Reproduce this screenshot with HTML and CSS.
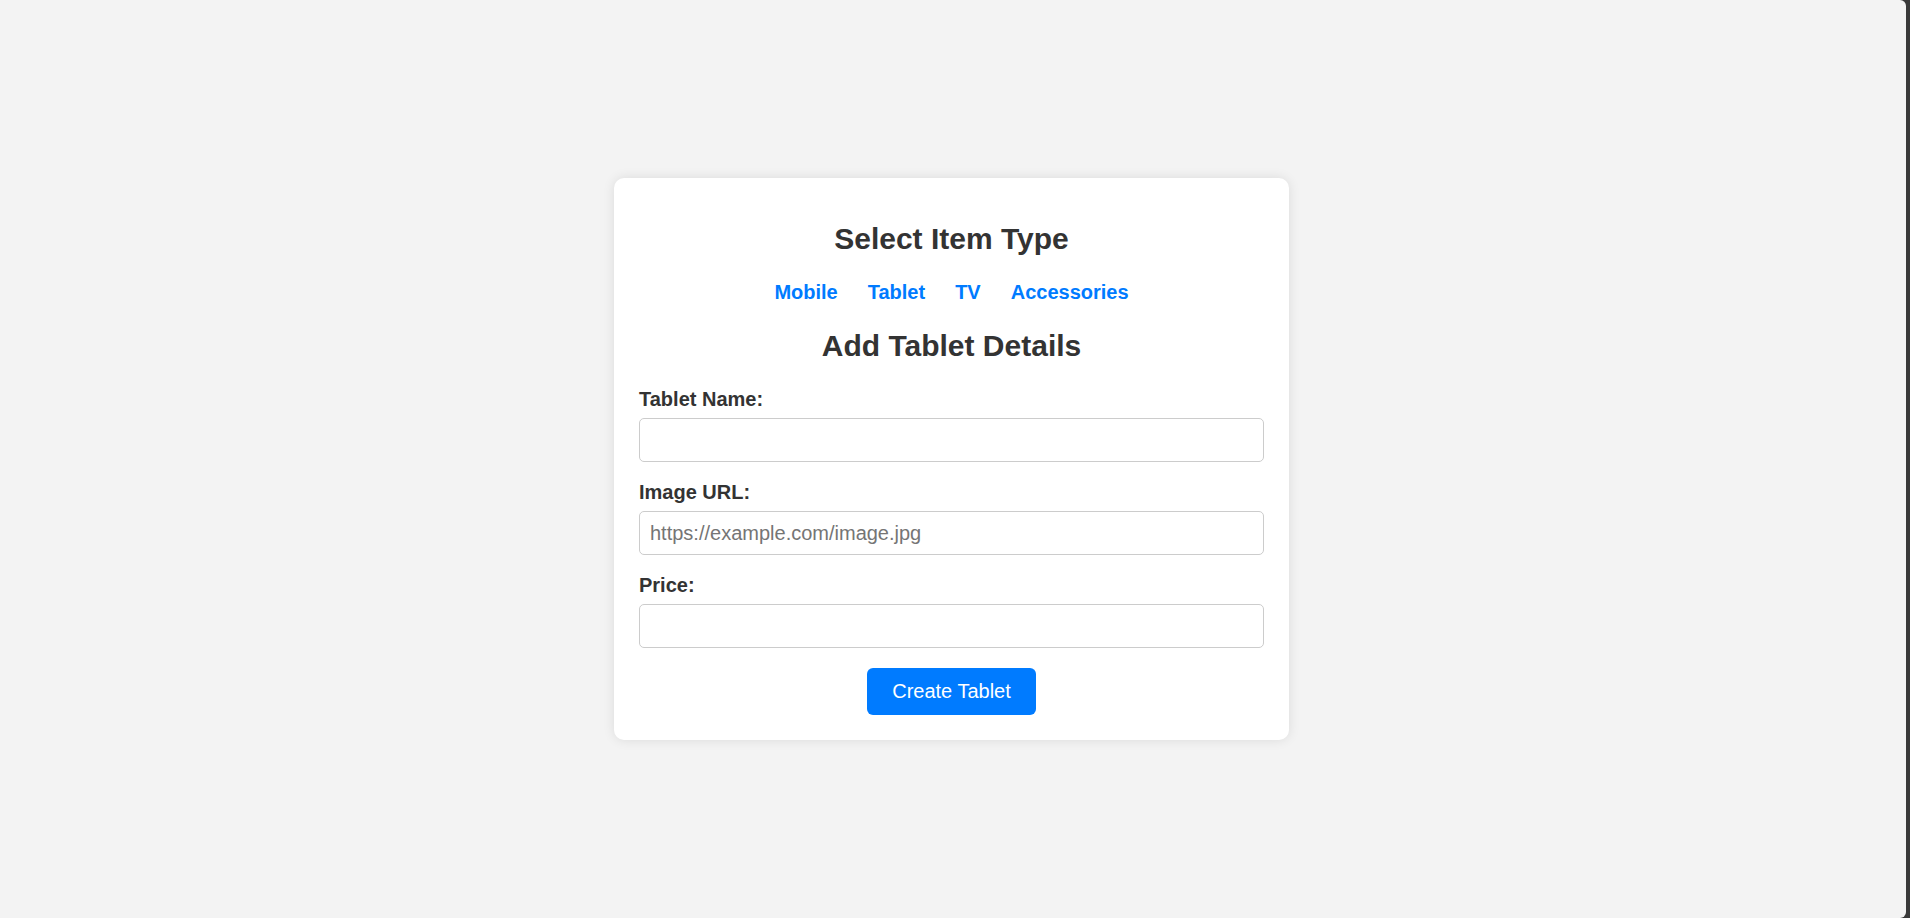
FILE: index.html
```html
<!DOCTYPE html>
<html lang="en">
<head>
<meta charset="UTF-8">
<title>Add Item</title>
<link rel="stylesheet" href="styles.css">
</head>
<body>
  <div class="page">
    <div class="card">
      <h2 class="title title-top">Select Item Type</h2>
      <nav class="types">
        <a class="type-link" href="#">Mobile</a>
        <a class="type-link" href="#">Tablet</a>
        <a class="type-link" href="#">TV</a>
        <a class="type-link" href="#">Accessories</a>
      </nav>
      <h2 class="title title-form">Add Tablet Details</h2>
      <form class="form">
        <div class="group">
          <label class="label" for="name">Tablet Name:</label>
          <input class="input" id="name" type="text">
        </div>
        <div class="group">
          <label class="label" for="image">Image URL:</label>
          <input class="input" id="image" type="text" placeholder="https://example.com/image.jpg">
        </div>
        <div class="group">
          <label class="label" for="price">Price:</label>
          <input class="input" id="price" type="text">
        </div>
        <div class="actions">
          <button class="btn" type="button">Create Tablet</button>
        </div>
      </form>
    </div>
  </div>
</body>
</html>
```

FILE: styles.css
```css
* { box-sizing: border-box; }

html {
  background: #393939;
  height: 100%;
}

body {
  margin: 0 4px 0 0;
  height: 100%;
  background: #f3f3f3;
  border-radius: 0 6px 6px 0;
  font-family: "Liberation Sans", Arial, sans-serif;
  color: #333;
}

.page {
  height: 100%;
  padding-right: 3px;
  display: flex;
  align-items: center;
  justify-content: center;
}

.card {
  width: 675px;
  padding: 25px;
  background: #fff;
  border-radius: 10px;
  box-shadow: 0 0 12px rgba(0, 0, 0, 0.1);
}

.title {
  margin: 0;
  font-size: 30px;
  line-height: 34.5px;
  font-weight: bold;
  text-align: center;
  color: #333;
}

.title-top { margin-top: 19.5px; }

.types {
  margin: 24px 0 25.5px;
  display: flex;
  justify-content: center;
  gap: 30px;
}

.type-link {
  color: #007bff;
  font-size: 20px;
  line-height: 23px;
  font-weight: bold;
  text-decoration: none;
}

.form {
  margin-top: 24.5px;
}

.group {
  margin-bottom: 19px;
}

.label {
  display: block;
  font-size: 20px;
  line-height: 23px;
  font-weight: bold;
  color: #333;
  margin-bottom: 7px;
}

.input {
  display: block;
  width: 100%;
  height: 44px;
  padding: 0 10px;
  border: 1px solid #ccc;
  border-radius: 5px;
  font-family: "Liberation Sans", Arial, sans-serif;
  font-size: 20px;
  color: #333;
  background: #fff;
}

.input::placeholder { color: #757575; }

.actions {
  text-align: center;
  padding-top: 0.5px;
}

.btn {
  height: 47.5px;
  padding: 0 25px;
  border: none;
  border-radius: 6px;
  background: #007bff;
  color: #fff;
  font-family: "Liberation Sans", Arial, sans-serif;
  font-size: 20px;
  cursor: pointer;
}
```
